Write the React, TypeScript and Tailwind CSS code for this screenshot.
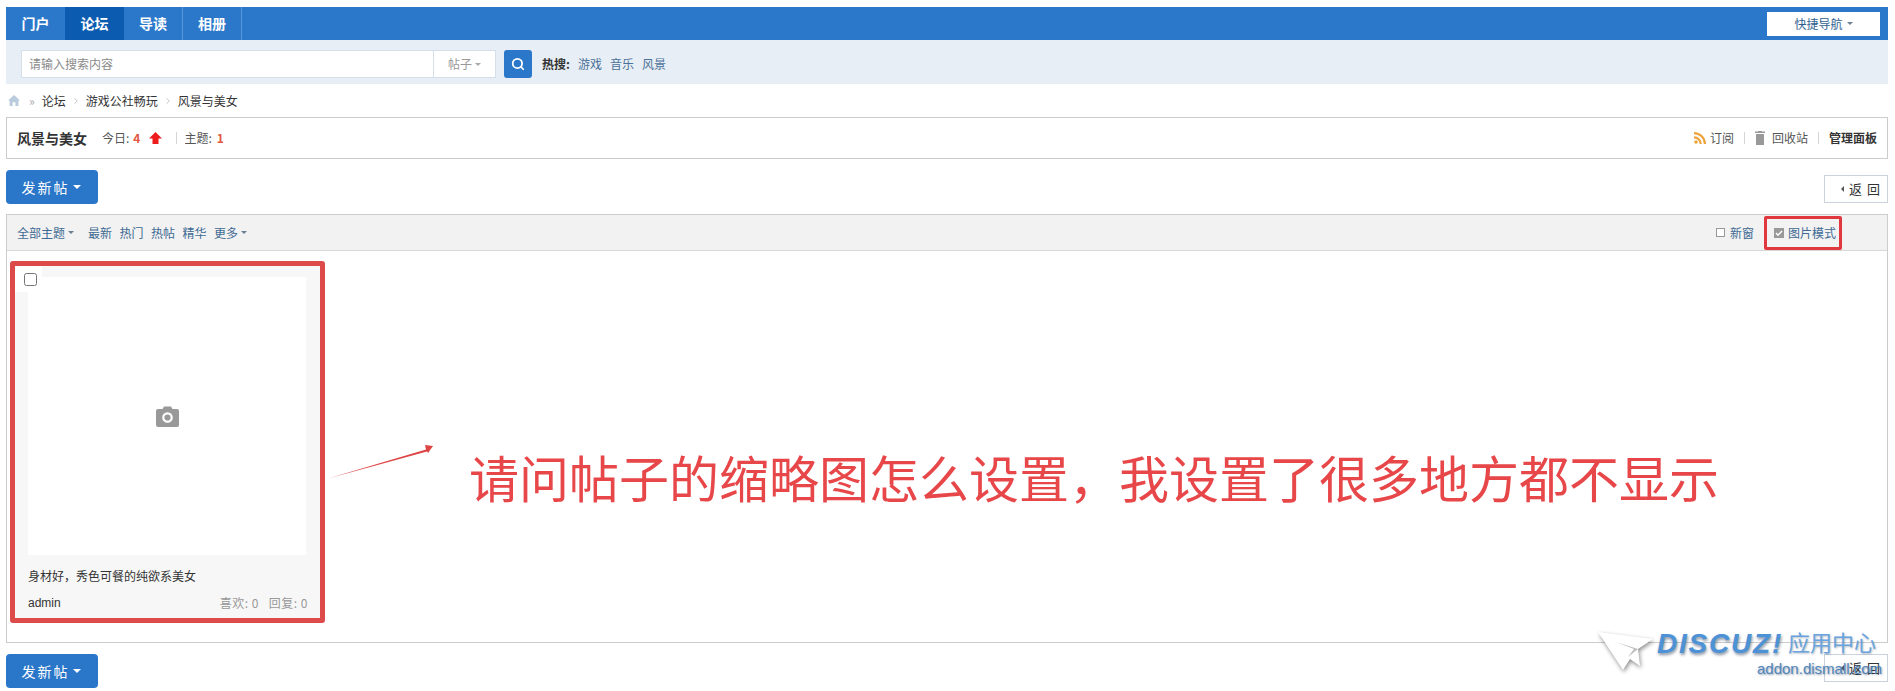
import React from 'react'
import { ChevronRight, Search } from 'lucide-react'

const navItems = ['门户', '论坛', '导读', '相册']
const filters = ['最新', '热门', '热帖', '精华']

const Caret = ({ className = 'border-t-[#6b7f93]' }: { className?: string }) => (
  <span className={`inline-block w-0 h-0 border-x-[3px] border-x-transparent border-t-[3px] ${className}`} />
)

const PostButton = () => (
  <button className="flex items-center justify-center w-[92px] h-[34px] rounded-[4px] bg-[#2a77c9] text-white text-[14px] tracking-[2px] pr-[2px]">
    发新帖
    <span className="ml-[3px] w-0 h-0 border-x-[4px] border-x-transparent border-t-[4px] border-t-white" />
  </button>
)

const BackButton = () => (
  <button className="flex items-center w-[64px] h-[28px] border border-[#c8d3de] bg-white pl-[16px] text-[13px] tracking-[5px] text-[#333]">
    <span className="mr-[5px] w-0 h-0 border-y-[3px] border-y-transparent border-r-[3px] border-r-[#555]" />
    <span className="whitespace-nowrap">返回</span>
  </button>
)

const Separator = () => <span className="block w-px h-[12px] bg-[#d5d5d5]" />

export default function App() {
  return (
    <div className="relative h-[691px] overflow-hidden bg-white pt-[7px] pl-[6px] pr-[7px] text-[12px] text-[#333] font-['Noto_Sans_CJK_SC','Liberation_Sans',sans-serif]">
      {/* 顶部导航 */}
      <div className="flex items-center justify-between h-[33px] bg-[#2b78ca] pr-[8px]">
        <div className="flex h-full">
          {navItems.map((item, i) => (
            <a
              key={item}
              className={`flex items-center justify-center w-[59px] h-full text-[14px] font-bold text-white ${i === 1 ? 'bg-[#0b5cb0]' : ''} ${i > 1 ? 'border-r border-[#5a97d8]' : ''}`}
            >
              {item}
            </a>
          ))}
        </div>
        <button className="flex items-center justify-center gap-[4px] w-[113px] h-[24px] bg-white text-[#2f5f8f]">
          快捷导航
          <Caret />
        </button>
      </div>

      {/* 搜索栏 */}
      <div className="flex items-start h-[44px] bg-[#e8eef5] pl-[15px] pt-[10px] leading-[28px]">
        <div className="flex w-[475px] h-[28px] border border-[#d5dfe9] bg-white">
          <span className="flex-1 pl-[7px] leading-[26px] text-[#8a8a8a]">请输入搜索内容</span>
          <span className="flex items-center justify-center gap-[3px] w-[62px] border-l border-[#d5dfe9] text-[#999]">
            帖子
            <Caret className="border-t-[#aaa]" />
          </span>
        </div>
        <button className="flex items-center justify-center ml-[8px] w-[28px] h-[28px] rounded-[3px] bg-[#2b78ca]">
          <Search className="w-[14px] h-[14px] text-white" strokeWidth={3} />
        </button>
        <span className="ml-[10px] font-bold">热搜:</span>
        <a className="ml-[8px] text-[#4a7199]">游戏</a>
        <a className="ml-[8px] text-[#4a7199]">音乐</a>
        <a className="ml-[8px] text-[#4a7199]">风景</a>
      </div>

      {/* 面包屑 */}
      <div className="flex items-center h-[33px] pl-[2px]">
        <svg viewBox="0 0 12 11" className="w-[12px] h-[11px] fill-[#b9cbdc]">
          <path d="M6 0 L12 5.5 L10.4 5.5 L10.4 11 L7.4 11 L7.4 7.2 L4.6 7.2 L4.6 11 L1.6 11 L1.6 5.5 L0 5.5 Z" />
        </svg>
        <span className="ml-[9px] text-[#aaa]">»</span>
        <a className="ml-[7px]">论坛</a>
        <ChevronRight className="mx-[5px] w-[10px] h-[10px] text-[#bbb]" />
        <a>游戏公社畅玩</a>
        <ChevronRight className="mx-[5px] w-[10px] h-[10px] text-[#bbb]" />
        <a>风景与美女</a>
      </div>

      {/* 版块信息 */}
      <div className="flex items-center justify-between h-[42px] border border-[#ccc] pl-[10px] pr-[10px]">
        <div className="flex items-center">
          <span className="text-[14px] font-bold">风景与美女</span>
          <span className="ml-[15px] text-[#555]">今日:</span>
          <b className="ml-[4px] text-[#e2583e]">4</b>
          <svg viewBox="0 0 13 12" className="ml-[9px] w-[13px] h-[12px] fill-[#ee1c1c]">
            <path d="M6.5 0 L13 6.5 L9.5 6.5 L9.5 12 L3.5 12 L3.5 6.5 L0 6.5 Z" />
          </svg>
          <span className="ml-[14px] w-px h-[12px] bg-[#d5d5d5]" />
          <span className="ml-[7px] text-[#555]">主题:</span>
          <b className="ml-[5px] text-[#e2583e]">1</b>
        </div>
        <div className="flex items-center">
          <svg viewBox="0 0 12 12" className="w-[12px] h-[12px] fill-[#eda43c]">
            <circle cx="2" cy="10" r="1.8" />
            <path d="M0 4.2 A7.8 7.8 0 0 1 7.8 12 L5.6 12 A5.6 5.6 0 0 0 0 6.4 Z" />
            <path d="M0 0 A12 12 0 0 1 12 12 L9.8 12 A9.8 9.8 0 0 0 0 2.2 Z" />
          </svg>
          <a className="ml-[4px] text-[#555]">订阅</a>
          <span className="mx-[10px]"><Separator /></span>
          <svg viewBox="0 0 10 14" className="w-[10px] h-[14px] fill-[#999]">
            <rect x="0" y="0.5" width="10" height="1.5" />
            <rect x="3" y="0" width="4" height="1" />
            <rect x="1" y="3" width="8" height="11" />
          </svg>
          <a className="ml-[7px] text-[#555]">回收站</a>
          <span className="mx-[10px]"><Separator /></span>
          <a className="font-bold">管理面板</a>
        </div>
      </div>

      {/* 操作条 */}
      <div className="flex items-start justify-between h-[34px] mt-[11px]">
        <PostButton />
        <div className="mt-[5px]">
          <BackButton />
        </div>
      </div>

      {/* 主题列表 */}
      <div className="mt-[10px] border border-[#ccc] h-[429px]">
        <div className="flex items-center justify-between h-[36px] bg-[#f2f2f2] border-b border-[#d8d8d8] pl-[10px] pr-[45px] text-[#3f6a93]">
          <div className="flex items-center">
            <a className="flex items-center gap-[3px]">
              全部主题
              <Caret />
            </a>
            <span className="flex items-center gap-[7.5px] ml-[14px]">
              {filters.map((f) => (
                <a key={f}>{f}</a>
              ))}
            </span>
            <a className="flex items-center gap-[3px] ml-[7.5px]">
              更多
              <Caret />
            </a>
          </div>
          <div className="flex items-center">
            <span className="w-[9px] h-[9px] border border-[#999] bg-white" />
            <a className="ml-[5px]">新窗</a>
            <div className="flex items-center ml-[10px] h-[34px] w-[78px] rounded-[2px] border-[3px] border-[#e0383e] pl-[7px]">
              <span className="flex items-center justify-center w-[10px] h-[10px] bg-[#999]">
                <svg viewBox="0 0 10 10" className="w-[10px] h-[10px] fill-none stroke-white stroke-[1.4]">
                  <path d="M2 5 L4 7.2 L8 3" />
                </svg>
              </span>
              <a className="ml-[4px] whitespace-nowrap">图片模式</a>
            </div>
          </div>
        </div>

        {/* 图片模式卡片 */}
        <div className="relative ml-[3px] mt-[10px] w-[315px] h-[362px] rounded-[3px] border-[5px] border-[#dd4a4a] bg-[#f7f7f7] pl-[13px] pr-[12px] pt-[11px]">
          <div className="absolute left-0 top-0 flex w-[27px] h-[26px] bg-white pl-[9px] pt-[7px]">
            <input type="checkbox" className="w-[13px] h-[13px]" />
          </div>
          <div className="flex items-center justify-center w-[278px] h-[278px] bg-white">
            <svg viewBox="0 0 23 21" className="w-[23px] h-[21px]">
              <path
                d="M2 3 L6.5 3 L8 0.5 L15 0.5 L16.5 3 L21 3 Q23 3 23 5 L23 19 Q23 21 21 21 L2 21 Q0 21 0 19 L0 5 Q0 3 2 3 Z"
                fill="#999"
              />
              <circle cx="11.5" cy="11.5" r="4.2" fill="none" stroke="white" strokeWidth="2.2" />
            </svg>
          </div>
          <p className="mt-[12px] leading-[18px]">身材好，秀色可餐的纯欲系美女</p>
          <div className="flex items-center justify-between mt-[9px] leading-[18px]">
            <span className="font-['Liberation_Sans',sans-serif]">admin</span>
            <span className="text-[#999] tracking-[0.5px]">
              喜欢: 0<span className="ml-[10px]">回复: 0</span>
            </span>
          </div>
        </div>
      </div>

      {/* 底部操作条 */}
      <div className="flex items-start justify-between mt-[11px]">
        <PostButton />
        <BackButton />
      </div>

      {/* 截图上的红色批注 */}
      <svg viewBox="0 0 110 40" className="absolute left-[326px] top-[442px] w-[110px] h-[40px]">
        <path d="M2 36.5 L100 7.5 L99 3 L107 4 L102 11 L101 9.5 Z" fill="#dd4444" />
      </svg>
      <div className="absolute left-[469px] top-[441px] text-[50px] leading-[70px] whitespace-nowrap text-[#e8474a]">
        请问帖子的缩略图怎么设置，我设置了很多地方都不显示
      </div>

      {/* 水印 */}
      <div className="absolute left-[1598px] top-[630px] w-[290px] h-[50px]">
        <svg viewBox="0 0 56 40" className="absolute left-0 top-[2px] w-[56px] h-[40px] drop-shadow-[1px_2px_2px_rgba(0,0,0,0.45)]">
          <path d="M0 0 L55 7 L40 17 L42 34 L32 27 L25 38 Z" fill="white" />
          <path d="M18 10 L40 17 L30 25 L36 17 Z" fill="#bdbdbd" />
        </svg>
        <span className="absolute left-[59px] top-[-2px] text-[28px] leading-[32px] font-bold italic whitespace-nowrap tracking-[1.8px] text-[#4d92d6] font-['Liberation_Sans',sans-serif] [text-shadow:1px_2px_3px_rgba(40,60,90,0.55)]">
          DISCUZ!
        </span>
        <span className="absolute left-[190px] top-[-5px] text-[22px] leading-[32px] whitespace-nowrap text-[#6aa4de] [text-shadow:1px_1px_2px_rgba(40,60,90,0.35)]">
          应用中心
        </span>
        <span className="absolute left-[159px] top-[30px] text-[15px] leading-[18px] whitespace-nowrap text-[#4f86bd] font-['Liberation_Sans',sans-serif] [text-shadow:1px_1px_2px_rgba(40,60,90,0.5)]">
          addon.dismall.com
        </span>
      </div>
    </div>
  )
}
